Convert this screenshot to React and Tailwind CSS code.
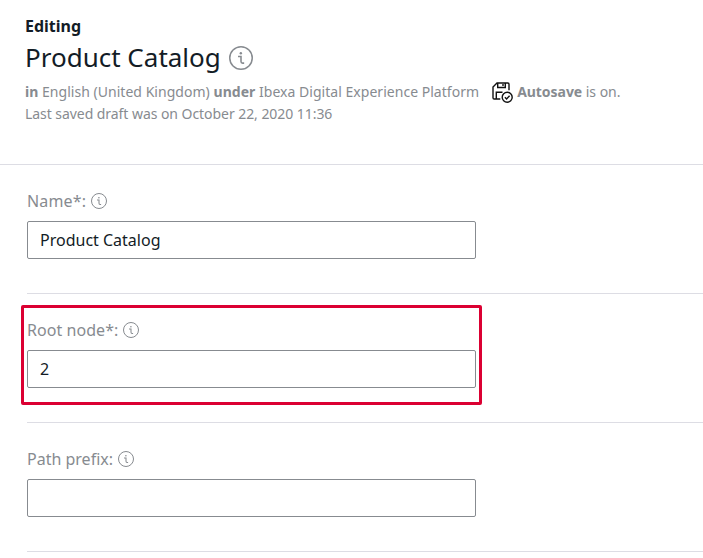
function InfoIcon({ className }) {
  return (
    <svg viewBox="0 0 32 32" fill="none" stroke="currentColor" className={className}>
      <circle cx="16" cy="16" r="15" strokeWidth="2" />
      <path d="M12 14h4v6.6q0 2.2 2.2 2.2h2" strokeWidth="2.1" />
      <circle cx="15.8" cy="9.6" r="1.6" fill="currentColor" stroke="none" />
    </svg>
  );
}

function AutosaveIcon() {
  return (
    <svg viewBox="0 0 21 21" fill="none" stroke="#111" strokeWidth="1.4" className="mt-px h-[21px] w-[21px] shrink-0">
      <path d="M8.3 17H2.2A1.2 1.2 0 0 1 1 15.8V5l4-4h10.8A1.2 1.2 0 0 1 17 2.2v6" />
      <path d="M5.7 1v4.5h7.6V1M11 2v2M4.3 17v-6.7h6.2" />
      <circle cx="15.2" cy="15.2" r="5" />
      <path d="m12.9 15.2 1.7 1.7 3-3.2" />
    </svg>
  );
}

function Field({ label, labelClass = "", value, highlighted }) {
  return (
    <div className="relative ml-[27px] h-[129px] border-b border-[#dddde4] pt-[24px]">
      {highlighted && (
        <div className="pointer-events-none absolute -left-[6px] top-[11px] h-[100px] w-[461px] rounded-[2px] border-[3px] border-[#db0032]" />
      )}
      <label className="flex h-[24px] items-center text-[16px] leading-[24px] text-[#878b90]">
        <span className={labelClass}>{label}</span>
        <InfoIcon className="ml-[5px] h-4 w-4" />
      </label>
      <input
        defaultValue={value}
        className="mt-[8px] block h-[38px] w-[449px] rounded-[2px] border border-[#878b90] bg-white px-3 text-[16px] leading-[24px] text-[#131c26] outline-none"
      />
    </div>
  );
}

export default function App() {
  return (
    <div className="h-[558px] w-[703px] overflow-hidden bg-white font-['Noto_Sans',sans-serif] text-[#131c26]">
      <header className="h-[165px] border-b border-[#dddde4] pl-[25px] pt-[14px]">
        <div className="text-[16px] font-bold leading-[24px]">Editing</div>
        <h1 className="flex h-[39px] items-center text-[26px] leading-[39px]">
          Product Catalog
          <InfoIcon className="ml-[8px] h-6 w-6 text-[#878b90]" />
        </h1>
        <div className="mt-[4px] flex h-[22px] items-center whitespace-nowrap text-[14px] leading-[22px] text-[#878b90]">
          <span className="tracking-[0.03px]">
            <b>in</b> English (United Kingdom) <b>under</b> Ibexa Digital Experience Platform
          </span>
          <span className="ml-[13px] flex items-center gap-[4px]">
            <AutosaveIcon />
            <span className="tracking-[-0.04px]">
              <b>Autosave</b> is on.
            </span>
          </span>
        </div>
        <div className="text-[14px] leading-[22px] tracking-[-0.055px] text-[#878b90]">Last saved draft was on October 22, 2020 11:36</div>
      </header>
      <main>
        <Field label="Name*:" labelClass="tracking-[0.15px]" value="Product Catalog" />
        <Field label="Root node*:" labelClass="tracking-[0.05px]" value="2" highlighted />
        <Field label="Path prefix:" value="" />
      </main>
    </div>
  );
}
